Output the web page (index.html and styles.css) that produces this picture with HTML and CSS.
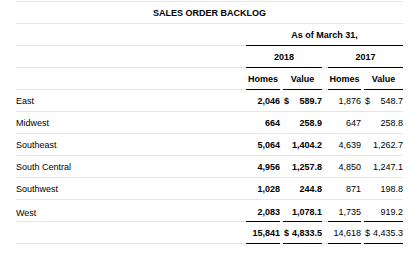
FILE: index.html
```html
<!DOCTYPE html>
<html>
<head>
<meta charset="utf-8">
<link rel="stylesheet" href="styles.css">
</head>
<body>
<div class="table">
  <div class="row title-row"><div class="title">SALES ORDER BACKLOG</div></div>
  <div class="row">
    <div class="label"></div>
    <div class="span4"><div class="u bold">As of March 31,</div></div>
  </div>
  <div class="row">
    <div class="label"></div>
    <div class="span2 g1"><div class="u bold">2018</div></div>
    <div class="span2"><div class="u bold">2017</div></div>
  </div>
  <div class="row">
    <div class="label"></div>
    <div class="c h1"><div class="u bold center">Homes</div></div>
    <div class="c v1"><div class="u bold center">Value</div></div>
    <div class="c h2"><div class="u bold center">Homes</div></div>
    <div class="c v2"><div class="u bold center">Value</div></div>
  </div>
  <div class="row">
    <div class="label">East</div>
    <div class="c h1"><div class="n bold">2,046</div></div>
    <div class="c v1"><div class="n bold"><span>$</span><span>589.7</span></div></div>
    <div class="c h2"><div class="n">1,876</div></div>
    <div class="c v2"><div class="n"><span>$</span><span>548.7</span></div></div>
  </div>
  <div class="row">
    <div class="label">Midwest</div>
    <div class="c h1"><div class="n bold">664</div></div>
    <div class="c v1"><div class="n bold">258.9</div></div>
    <div class="c h2"><div class="n">647</div></div>
    <div class="c v2"><div class="n">258.8</div></div>
  </div>
  <div class="row">
    <div class="label">Southeast</div>
    <div class="c h1"><div class="n bold">5,064</div></div>
    <div class="c v1"><div class="n bold">1,404.2</div></div>
    <div class="c h2"><div class="n">4,639</div></div>
    <div class="c v2"><div class="n">1,262.7</div></div>
  </div>
  <div class="row">
    <div class="label">South Central</div>
    <div class="c h1"><div class="n bold">4,956</div></div>
    <div class="c v1"><div class="n bold">1,257.8</div></div>
    <div class="c h2"><div class="n">4,850</div></div>
    <div class="c v2"><div class="n">1,247.1</div></div>
  </div>
  <div class="row">
    <div class="label">Southwest</div>
    <div class="c h1"><div class="n bold">1,028</div></div>
    <div class="c v1"><div class="n bold">244.8</div></div>
    <div class="c h2"><div class="n">871</div></div>
    <div class="c v2"><div class="n">198.8</div></div>
  </div>
  <div class="row west">
    <div class="label">West</div>
    <div class="c h1"><div class="n bold">2,083</div></div>
    <div class="c v1"><div class="n bold">1,078.1</div></div>
    <div class="c h2"><div class="n">1,735</div></div>
    <div class="c v2"><div class="n">919.2</div></div>
  </div>
  <div class="row total">
    <div class="label"></div>
    <div class="c h1"><div class="u n bold">15,841</div></div>
    <div class="c v1"><div class="u n bold"><span>$</span><span>4,833.5</span></div></div>
    <div class="c h2"><div class="u n">14,618</div></div>
    <div class="c v2"><div class="u n"><span>$</span><span>4,435.3</span></div></div>
  </div>
</div>
</body>
</html>
```
FILE: styles.css
```css
html, body {
  margin: 0;
  padding: 0;
  background: #fff;
}
body {
  font-family: "Liberation Sans", Arial, sans-serif;
  font-size: 9px;
  color: #000;
}
.table {
  margin: 1px 0 0 16px;
  width: 387px;
  border-top: 1px solid #e6e6e6;
}
.row {
  display: grid;
  grid-template-columns: 230px 37px 45px 36px 39px;
  height: 21px;
  border-bottom: 1px solid #e6e6e6;
}
.title-row {
  grid-template-columns: 1fr;
}
.title {
  font-weight: bold;
  text-align: center;
  align-self: center;
}
.label {
  align-self: center;
}
.span4 {
  grid-column: 2 / 6;
  display: flex;
}
.span2 {
  grid-column: span 2;
  display: flex;
}
.g1 {
  padding-right: 6px;
}
.c {
  display: flex;
}
.h1, .h2 {
  padding-right: 3px;
}
.v1 {
  padding-right: 6px;
}
.u {
  flex: 1;
  display: flex;
  align-items: center;
  justify-content: center;
  border-bottom: 1px solid #000;
  margin-bottom: -1px;
}
.bold {
  font-weight: bold;
}
.n {
  flex: 1;
  display: flex;
  align-items: center;
  justify-content: flex-end;
}
.n span:first-child:not(:last-child) {
  margin-right: auto;
  padding-left: 1px;
}
.total .u {
  border-top: 1px solid #000;
  margin-top: -1px;
}
.west .label {
  padding-top: 4px;
}
.west .n {
  padding-top: 2px;
}
```
